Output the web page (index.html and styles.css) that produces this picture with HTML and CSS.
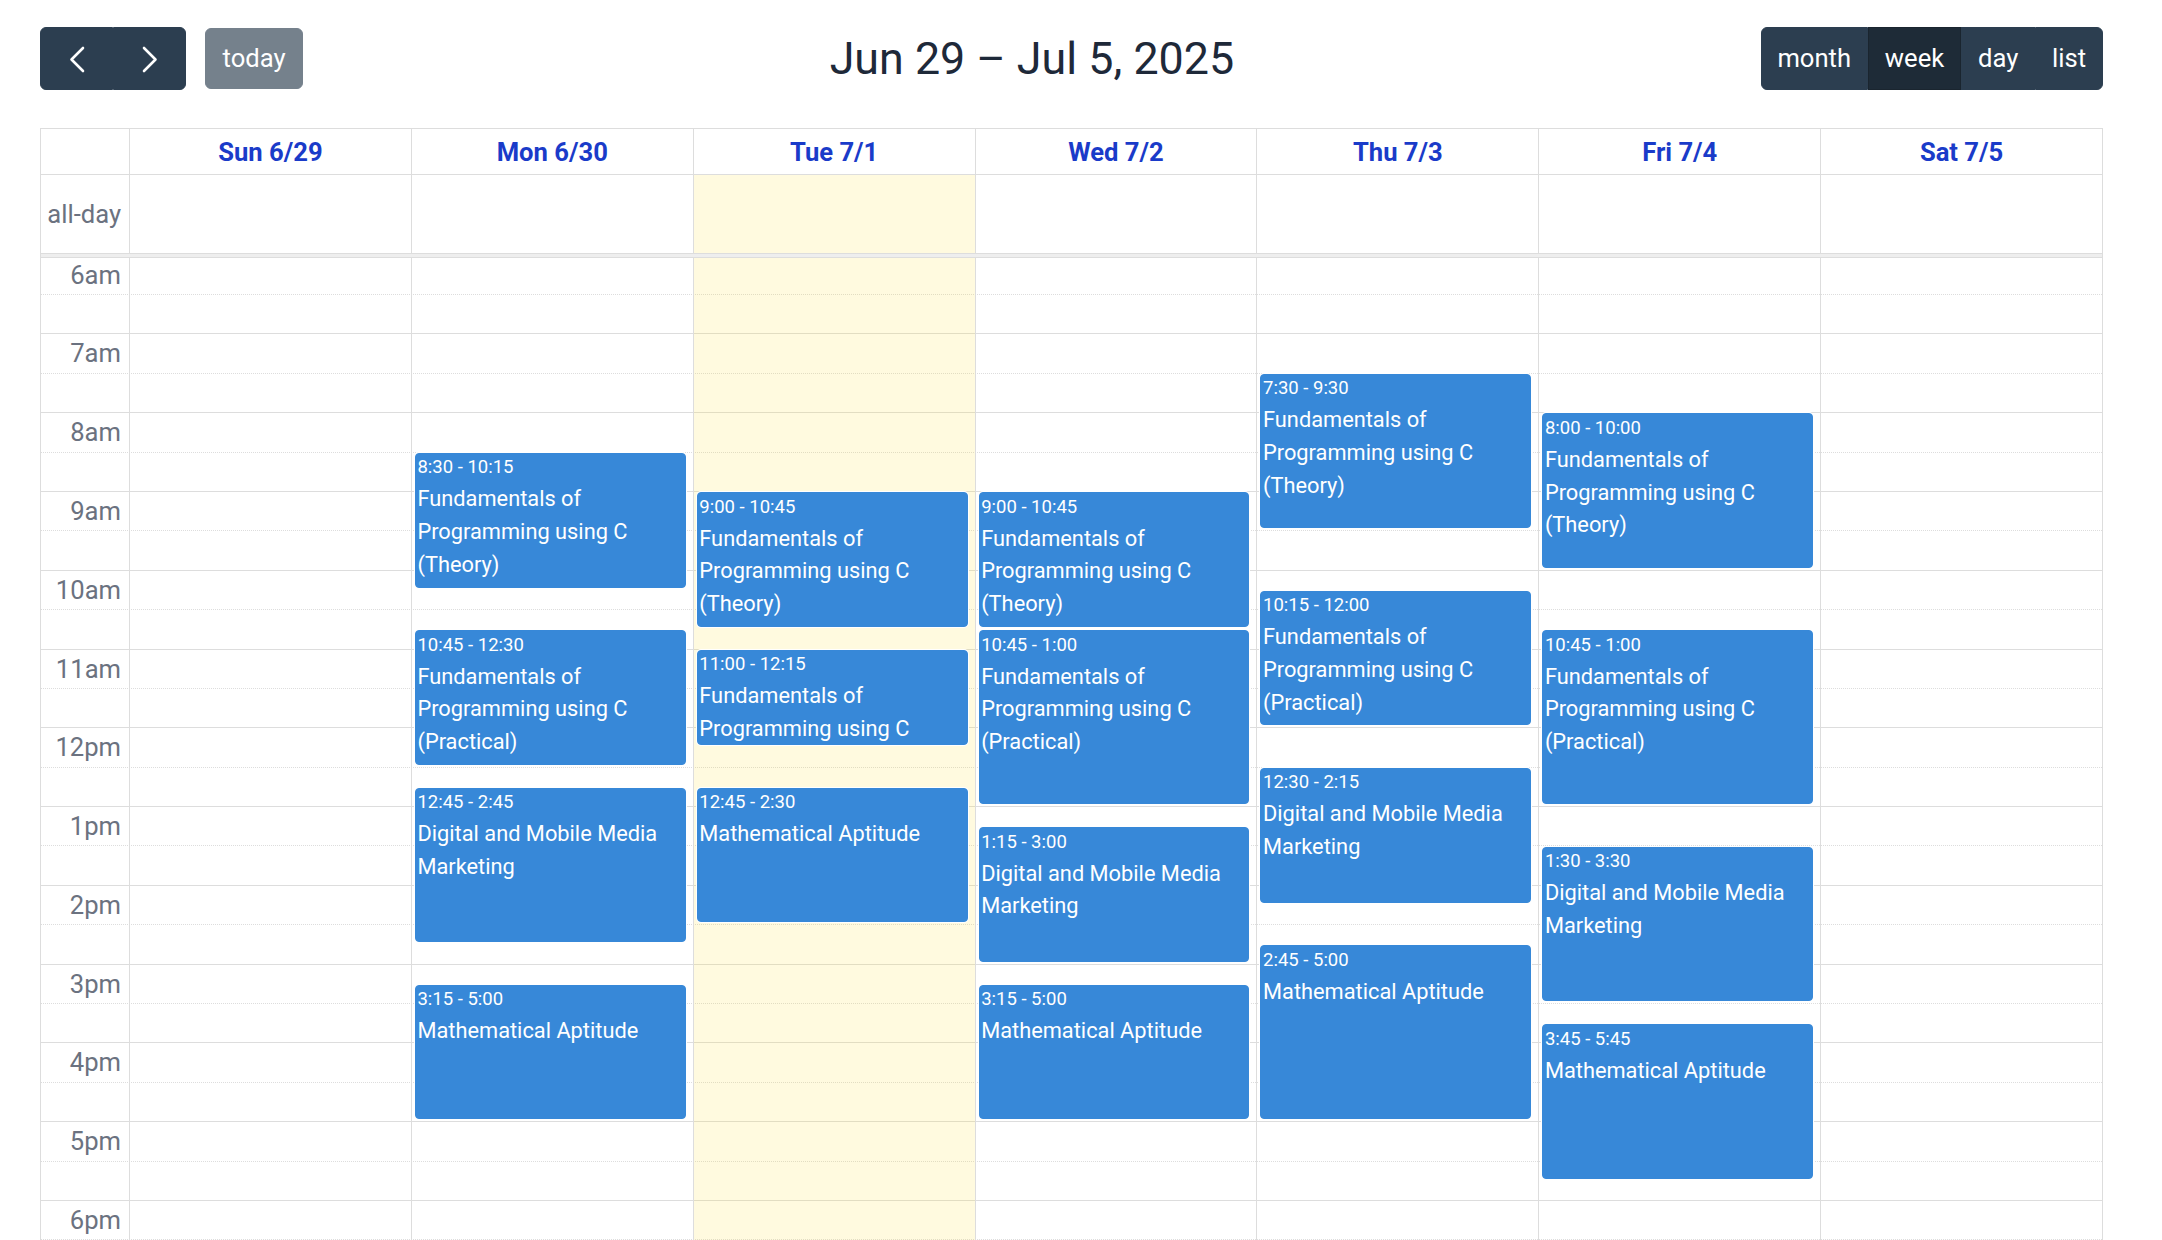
FILE: index.html
```html
<!DOCTYPE html>
<html lang="en">
<head>
<meta charset="utf-8">
<title>Week calendar</title>
<link rel="stylesheet" href="styles.css">
</head>
<body>
<div class="cal">
  <div class="toolbar">
    <div class="chunk">
      <div class="group">
        <button class="btn btn-icon" aria-label="prev"><svg width="38" height="38" viewBox="0 0 38 38"><polyline points="25,8 13.5,19.5 25,31" fill="none" stroke="#fff" stroke-width="2.6" stroke-linecap="round" stroke-linejoin="round"/></svg></button>
        <button class="btn btn-icon" aria-label="next"><svg width="38" height="38" viewBox="0 0 38 38"><polyline points="13,8 24.5,19.5 13,31" fill="none" stroke="#fff" stroke-width="2.6" stroke-linecap="round" stroke-linejoin="round"/></svg></button>
      </div>
      <button class="btn btn-today">today</button>
    </div>
    <h2 class="title">Jun 29 – Jul 5, 2025</h2>
    <div class="chunk">
      <div class="group">
        <button class="btn">month</button>
        <button class="btn active">week</button>
        <button class="btn">day</button>
        <button class="btn">list</button>
      </div>
    </div>
  </div>

  <div class="table">
    <div class="row head">
      <div class="axis"></div>
      <div class="hcell">Sun 6/29</div>
      <div class="hcell">Mon 6/30</div>
      <div class="hcell">Tue 7/1</div>
      <div class="hcell">Wed 7/2</div>
      <div class="hcell">Thu 7/3</div>
      <div class="hcell">Fri 7/4</div>
      <div class="hcell">Sat 7/5</div>
    </div>
    <div class="row allday">
      <div class="axis allday-label">all-day</div>
      <div class="dcell"></div>
      <div class="dcell"></div>
      <div class="dcell today"></div>
      <div class="dcell"></div>
      <div class="dcell"></div>
      <div class="dcell"></div>
      <div class="dcell"></div>
    </div>
    <div class="divider"></div>

    <div class="body">
      <div class="lanes">
        <div class="slot"><div class="slot-label">6am</div></div>
        <div class="slot minor"><div class="slot-label"></div></div>
        <div class="slot"><div class="slot-label">7am</div></div>
        <div class="slot minor"><div class="slot-label"></div></div>
        <div class="slot"><div class="slot-label">8am</div></div>
        <div class="slot minor"><div class="slot-label"></div></div>
        <div class="slot"><div class="slot-label">9am</div></div>
        <div class="slot minor"><div class="slot-label"></div></div>
        <div class="slot"><div class="slot-label">10am</div></div>
        <div class="slot minor"><div class="slot-label"></div></div>
        <div class="slot"><div class="slot-label">11am</div></div>
        <div class="slot minor"><div class="slot-label"></div></div>
        <div class="slot"><div class="slot-label">12pm</div></div>
        <div class="slot minor"><div class="slot-label"></div></div>
        <div class="slot"><div class="slot-label">1pm</div></div>
        <div class="slot minor"><div class="slot-label"></div></div>
        <div class="slot"><div class="slot-label">2pm</div></div>
        <div class="slot minor"><div class="slot-label"></div></div>
        <div class="slot"><div class="slot-label">3pm</div></div>
        <div class="slot minor"><div class="slot-label"></div></div>
        <div class="slot"><div class="slot-label">4pm</div></div>
        <div class="slot minor"><div class="slot-label"></div></div>
        <div class="slot"><div class="slot-label">5pm</div></div>
        <div class="slot minor"><div class="slot-label"></div></div>
        <div class="slot"><div class="slot-label">6pm</div></div>
        <div class="slot minor"><div class="slot-label"></div></div>
        <div class="slot"><div class="slot-label">7pm</div></div>
        <div class="slot minor"><div class="slot-label"></div></div>

        <div class="cols">
          <div class="col-axis"></div>
          <div class="col"></div>
          <div class="col">
            <div class="events">
              <div class="ev" style="--s:8.5;--e:10.25"><div class="ev-time">8:30 - 10:15</div><div class="ev-title">Fundamentals of Programming using C (Theory)</div></div>
              <div class="ev" style="--s:10.75;--e:12.5"><div class="ev-time">10:45 - 12:30</div><div class="ev-title">Fundamentals of Programming using C (Practical)</div></div>
              <div class="ev" style="--s:12.75;--e:14.75"><div class="ev-time">12:45 - 2:45</div><div class="ev-title">Digital and Mobile Media Marketing</div></div>
              <div class="ev" style="--s:15.25;--e:17"><div class="ev-time">3:15 - 5:00</div><div class="ev-title">Mathematical Aptitude</div></div>
            </div>
          </div>
          <div class="col today">
            <div class="events">
              <div class="ev" style="--s:9;--e:10.75"><div class="ev-time">9:00 - 10:45</div><div class="ev-title">Fundamentals of Programming using C (Theory)</div></div>
              <div class="ev" style="--s:11;--e:12.25"><div class="ev-time">11:00 - 12:15</div><div class="ev-title">Fundamentals of Programming using C (Practical)</div></div>
              <div class="ev" style="--s:12.75;--e:14.5"><div class="ev-time">12:45 - 2:30</div><div class="ev-title">Mathematical Aptitude</div></div>
            </div>
          </div>
          <div class="col">
            <div class="events">
              <div class="ev" style="--s:9;--e:10.75"><div class="ev-time">9:00 - 10:45</div><div class="ev-title">Fundamentals of Programming using C (Theory)</div></div>
              <div class="ev" style="--s:10.75;--e:13"><div class="ev-time">10:45 - 1:00</div><div class="ev-title">Fundamentals of Programming using C (Practical)</div></div>
              <div class="ev" style="--s:13.25;--e:15"><div class="ev-time">1:15 - 3:00</div><div class="ev-title">Digital and Mobile Media Marketing</div></div>
              <div class="ev" style="--s:15.25;--e:17"><div class="ev-time">3:15 - 5:00</div><div class="ev-title">Mathematical Aptitude</div></div>
            </div>
          </div>
          <div class="col">
            <div class="events">
              <div class="ev" style="--s:7.5;--e:9.5"><div class="ev-time">7:30 - 9:30</div><div class="ev-title">Fundamentals of Programming using C (Theory)</div></div>
              <div class="ev" style="--s:10.25;--e:12"><div class="ev-time">10:15 - 12:00</div><div class="ev-title">Fundamentals of Programming using C (Practical)</div></div>
              <div class="ev" style="--s:12.5;--e:14.25"><div class="ev-time">12:30 - 2:15</div><div class="ev-title">Digital and Mobile Media Marketing</div></div>
              <div class="ev" style="--s:14.75;--e:17"><div class="ev-time">2:45 - 5:00</div><div class="ev-title">Mathematical Aptitude</div></div>
            </div>
          </div>
          <div class="col">
            <div class="events">
              <div class="ev" style="--s:8;--e:10"><div class="ev-time">8:00 - 10:00</div><div class="ev-title">Fundamentals of Programming using C (Theory)</div></div>
              <div class="ev" style="--s:10.75;--e:13"><div class="ev-time">10:45 - 1:00</div><div class="ev-title">Fundamentals of Programming using C (Practical)</div></div>
              <div class="ev" style="--s:13.5;--e:15.5"><div class="ev-time">1:30 - 3:30</div><div class="ev-title">Digital and Mobile Media Marketing</div></div>
              <div class="ev" style="--s:15.75;--e:17.75"><div class="ev-time">3:45 - 5:45</div><div class="ev-title">Mathematical Aptitude</div></div>
            </div>
          </div>
          <div class="col"></div>
        </div>
      </div>
    </div>
  </div>
</div>
</body>
</html>
```

FILE: styles.css
```css
* { box-sizing: border-box; }

html, body {
  margin: 0;
  overflow: hidden;
  background: #fff;
}

body {
  font-family: Roboto, "Liberation Sans", sans-serif;
  font-size: 25.6px;
  color: #1e2939;
}

.cal {
  margin: 0 59px 0 40px;
  padding-top: 27px;
}

/* ---------- toolbar ---------- */
.toolbar {
  display: flex;
  justify-content: space-between;
  align-items: center;
  height: 63px;
  margin-bottom: 38px;
}

.chunk {
  display: flex;
  align-items: center;
}

.group {
  display: flex;
}

.btn {
  font-family: inherit;
  font-size: 25.6px;
  line-height: 39px;
  height: 63px;
  padding: 0 16.6px;
  border: 1px solid #2c3e50;
  background: #2c3e50;
  color: #fff;
  border-radius: 6px;
  display: inline-flex;
  align-items: center;
  justify-content: center;
  margin: 0;
}

.group .btn { border-radius: 0; padding: 0 15.9px; }
.group .btn:first-child { border-radius: 6px 0 0 6px; }
.group .btn:last-child { border-radius: 0 6px 6px 0; }

.group .btn-icon {
  width: 73px;
  padding: 0;
}

.btn-icon svg { display: block; }

.btn-today {
  margin-left: 19px;
  opacity: 0.65;
  height: 61px;
}

.btn.active {
  background: #1e2b37;
  border-color: #1a252f;
}

.title {
  margin: 0;
  font-size: 44.8px;
  font-weight: 400;
  color: #1e2939;
}

/* ---------- table ---------- */
.table {
  border: 1px solid #ddd;
  border-bottom: 0;
}

.row {
  display: grid;
  grid-template-columns: 88px repeat(7, 1fr);
}

.head {
  height: 46px;
  border-bottom: 1px solid #ddd;
}

.hcell {
  border-left: 1px solid #ddd;
  display: flex;
  align-items: center;
  justify-content: center;
  font-weight: 700;
  color: #1a3bc9;
}

.allday {
  height: 78px;
}

.allday-label {
  display: flex;
  align-items: center;
  justify-content: flex-end;
  padding-right: 8px;
  color: #6b7280;
}

.dcell {
  border-left: 1px solid #ddd;
}

.today {
  background: rgba(255, 220, 40, 0.15);
}

.divider {
  height: 5px;
  border-top: 1px solid #ddd;
  border-bottom: 1px solid #ddd;
  background: #eee;
}

/* ---------- time grid ---------- */
.body {
  height: 1000px;
  overflow: hidden;
}

.lanes {
  position: relative;
  margin-top: -3.4px;
}

.slot {
  display: grid;
  grid-template-columns: 88px 1fr;
  height: 39.4px;
  border-top: 1px solid #ddd;
}

.slot.minor {
  border-top-style: dotted;
}

.slot-label {
  text-align: right;
  padding-right: 8px;
  line-height: 38.4px;
  color: #6b7280;
  white-space: nowrap;
}

.cols {
  position: absolute;
  inset: 0;
  display: grid;
  grid-template-columns: 88px repeat(7, 1fr);
}

.col {
  border-left: 1px solid #ddd;
  position: relative;
}

.events {
  position: absolute;
  top: 0;
  bottom: 0;
  left: 3px;
  right: 2.5%;
}

.ev {
  position: absolute;
  left: 0;
  right: 0;
  top: calc((var(--s) - 6) * 78.8px + 1px);
  height: calc((var(--e) - var(--s)) * 78.8px - 3px);
  background: #3788d8;
  border: 1px solid #3788d8;
  border-radius: 4px;
  box-shadow: 0 0 0 1px #fff;
  color: #fff;
  overflow: hidden;
  padding: 3.6px 1.6px 1.6px;
}

.ev-time {
  font-size: 18.5px;
  line-height: 21px;
  margin-bottom: 5px;
  white-space: nowrap;
}

.ev-title {
  font-size: 21.8px;
  line-height: 32.8px;
}
```
